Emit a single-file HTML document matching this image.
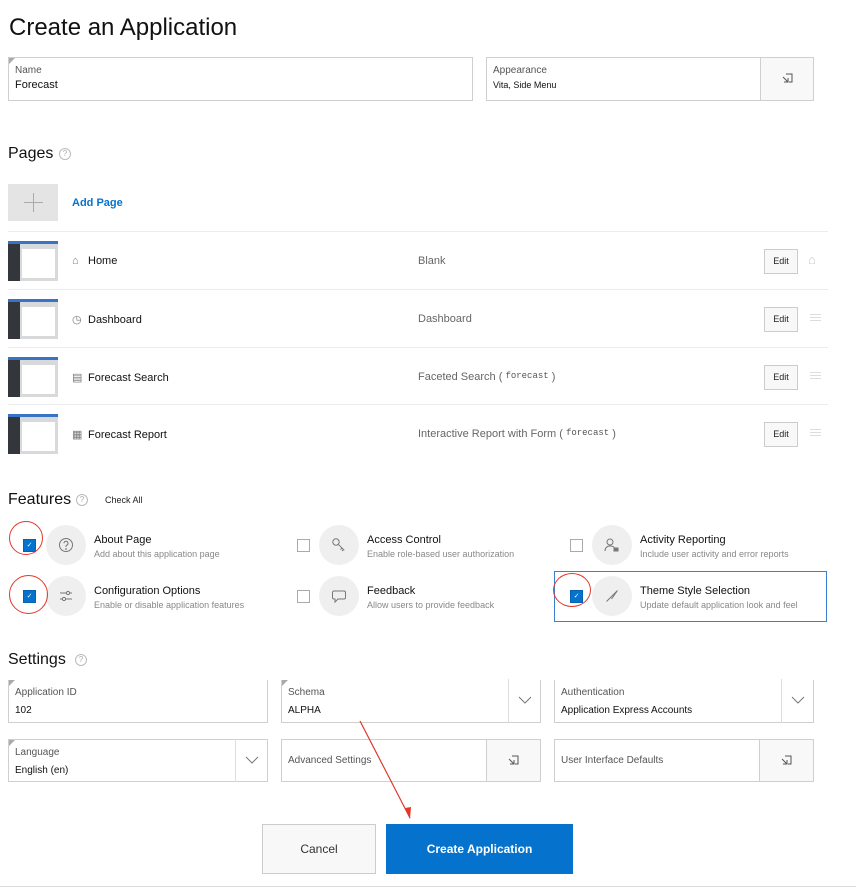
<!DOCTYPE html>
<html><head><meta charset="utf-8">
<style>
*{box-sizing:border-box;margin:0;padding:0}
body{width:856px;height:892px;background:#fff;font-family:"Liberation Sans",sans-serif;color:#000;position:relative;overflow:hidden}
.a{position:absolute}
.fld{position:absolute;border:1px solid #cfcfcf;background:#fff}
.fld .l{position:absolute;left:6px;top:7px;font-size:10px;color:#555}
.fld .v{position:absolute;left:6px;top:25px;font-size:10px;color:#111}
.fld .tri{position:absolute;left:0;top:0;width:0;height:0;border-top:6px solid #aaa;border-right:6px solid transparent}
.btn{position:absolute;top:-1px;bottom:-1px;right:-1px;border:1px solid #cfcfcf;background:#f8f8f8}
h2{position:absolute;font-size:16px;font-weight:normal;color:#111}
.q{position:absolute;width:12px;height:12px;border:1px solid #bbb;border-radius:50%;font-size:8px;color:#aaa;text-align:center;line-height:10px}
.row{position:absolute;left:8px;width:820px;height:58px;border-top:1px solid #ececec}
.thumb{position:absolute;left:0;top:9px;width:50px;height:40px;background:#d8d9db}
.thumb:before{content:"";position:absolute;left:0;top:0;width:50px;height:3px;background:#3a73c5}
.thumb:after{content:"";position:absolute;left:0;top:3px;width:12px;height:37px;background:#33363a}
.thumb i{position:absolute;left:14px;top:8px;width:33px;height:29px;background:#fff}
.pn{position:absolute;left:64px;top:23px;font-size:11px;color:#111}
.pn span{display:inline-block;width:16px;color:#777;font-size:11px}
.pt{position:absolute;left:410px;top:23px;font-size:11px;color:#666}
.pt code{font-family:"Liberation Mono",monospace;font-size:9px;color:#555;position:relative;top:-2px}
.ed{position:absolute;left:756px;top:17px;width:34px;height:25px;border:1px solid #ccc;background:#f8f8f8;font-size:9px;text-align:center;line-height:23px;color:#222}
.hb{position:absolute;left:802px;top:24px;width:11px;height:9px;background:repeating-linear-gradient(#ddd 0 1px,transparent 1px 3px)}
.cb{position:absolute;width:13px;height:13px;border:1px solid #aaa;background:#fff}
.cb.on{background:#0572ce;border-color:#0562b0;color:#fff;font-size:7px;text-align:center;line-height:11px}
.ci{position:absolute;width:40px;height:40px;border-radius:50%;background:#efefef}
.ci svg{position:absolute;left:12px;top:12px}
.ft{position:absolute;font-size:11px;color:#111}
.fd{position:absolute;font-size:9px;color:#888}
.red{position:absolute;border:1.5px solid #e0382c;border-radius:50%}
.dd{position:absolute;top:-1px;bottom:-1px;right:-1px;width:33px;border-left:1px solid #ddd}
</style></head><body>
<div class="a" style="left:9px;top:14px;font-size:24px;color:#111">Create an Application</div>

<div class="fld" style="left:8px;top:57px;width:465px;height:44px"><div class="tri"></div><div class="l">Name</div><div class="v" style="font-size:11px;top:21px">Forecast</div></div>
<div class="fld" style="left:486px;top:57px;width:328px;height:44px"><div class="l">Appearance</div><div class="v" style="top:22px;font-size:9px">Vita, Side Menu</div>
<div class="btn" style="width:54px"><svg class="a" style="left:20px;top:14px" width="13" height="13" viewBox="0 0 13 13" fill="none" stroke="#555"><path d="M5 2h6v8H8M2 5l5 5M7 6v4H3"/></svg></div></div>

<h2 style="left:8px;top:145px">Pages</h2><div class="q" style="left:59px;top:148px">?</div>
<div class="a" style="left:8px;top:184px;width:50px;height:37px;background:#e4e4e4"><div class="a" style="left:16px;top:18px;width:19px;height:1px;background:#aaa"></div><div class="a" style="left:25px;top:9px;width:1px;height:19px;background:#aaa"></div></div>
<div class="a" style="left:72px;top:197px;font-size:11px;color:#0572ce;font-weight:bold">Add Page</div>

<div class="row" style="top:231px"><div class="thumb"><i></i></div><div class="pn"><span>⌂</span>Home</div><div class="pt">Blank</div><div class="ed">Edit</div><div class="a" style="left:800px;top:20px;font-size:13px;color:#ccc">⌂</div></div>
<div class="row" style="top:289px"><div class="thumb"><i></i></div><div class="pn"><span>◷</span>Dashboard</div><div class="pt">Dashboard</div><div class="ed">Edit</div><div class="hb"></div></div>
<div class="row" style="top:347px"><div class="thumb"><i></i></div><div class="pn"><span>▤</span>Forecast Search</div><div class="pt">Faceted Search ( <code>forecast</code> )</div><div class="ed">Edit</div><div class="hb"></div></div>
<div class="row" style="top:404px"><div class="thumb"><i></i></div><div class="pn"><span>▦</span>Forecast Report</div><div class="pt">Interactive Report with Form ( <code>forecast</code> )</div><div class="ed">Edit</div><div class="hb"></div></div>

<h2 style="left:8px;top:491px">Features</h2><div class="q" style="left:76px;top:494px">?</div>
<div class="a" style="left:105px;top:495px;font-size:9px;color:#222">Check All</div>

<div class="a" style="left:554px;top:571px;width:273px;height:51px;border:1px solid #3a80d0"></div>
<div class="cb on" style="left:23px;top:539px">✓</div>
<div class="ci" style="left:46px;top:525px"><svg width="16" height="16" viewBox="0 0 16 16" fill="none" stroke="#777"><circle cx="8" cy="8" r="6.5"/><path d="M6 6.3a2 2 0 1 1 2.5 1.9c-.4.2-.5.5-.5 1V10"/><circle cx="8" cy="12" r=".4" fill="#777"/></svg></div>
<div class="ft" style="left:94px;top:534px">About Page</div><div class="fd" style="left:94px;top:549px">Add about this application page</div>
<div class="cb" style="left:297px;top:539px"></div>
<div class="ci" style="left:319px;top:525px"><svg width="16" height="16" viewBox="0 0 16 16" fill="none" stroke="#777"><circle cx="5" cy="5" r="3.2"/><path d="M7.3 7.3l6 6M11 11l-1.5 1.5M12.5 12.5L11 14"/></svg></div>
<div class="ft" style="left:367px;top:534px">Access Control</div><div class="fd" style="left:367px;top:549px">Enable role-based user authorization</div>
<div class="cb" style="left:570px;top:539px"></div>
<div class="ci" style="left:592px;top:525px"><svg width="16" height="16" viewBox="0 0 16 16" fill="none" stroke="#777"><circle cx="6" cy="5" r="3"/><path d="M1 14c0-3 2-5 5-5s4 1 4.5 2"/><rect x="10" y="11" width="4" height="3" fill="#777"/></svg></div>
<div class="ft" style="left:640px;top:534px">Activity Reporting</div><div class="fd" style="left:640px;top:549px">Include user activity and error reports</div>

<div class="cb on" style="left:23px;top:590px">✓</div>
<div class="ci" style="left:46px;top:576px"><svg width="16" height="16" viewBox="0 0 16 16" fill="none" stroke="#777"><path d="M2 5h12M2 11h12"/><circle cx="10" cy="5" r="1.6" fill="#efefef"/><circle cx="6" cy="11" r="1.6" fill="#efefef"/></svg></div>
<div class="ft" style="left:94px;top:585px">Configuration Options</div><div class="fd" style="left:94px;top:600px">Enable or disable application features</div>
<div class="cb" style="left:297px;top:590px"></div>
<div class="ci" style="left:319px;top:576px"><svg width="16" height="16" viewBox="0 0 16 16" fill="none" stroke="#777"><path d="M3 3h10a1.5 1.5 0 0 1 1.5 1.5v5A1.5 1.5 0 0 1 13 11H7l-3 3v-3H3a1.5 1.5 0 0 1-1.5-1.5v-5A1.5 1.5 0 0 1 3 3z"/></svg></div>
<div class="ft" style="left:367px;top:585px">Feedback</div><div class="fd" style="left:367px;top:600px">Allow users to provide feedback</div>
<div class="cb on" style="left:570px;top:590px">✓</div>
<div class="ci" style="left:592px;top:576px"><svg width="16" height="16" viewBox="0 0 16 16" fill="none" stroke="#777"><path d="M13.5 2.5L6 10l-1 1-2.5 2.5M13.5 2.5l-6 8.5M5 11l1.5-1.5"/></svg></div>
<div class="ft" style="left:640px;top:585px">Theme Style Selection</div><div class="fd" style="left:640px;top:600px">Update default application look and feel</div>

<div class="red" style="left:9px;top:521px;width:34px;height:34px"></div>
<div class="red" style="left:9px;top:575px;width:39px;height:39px"></div>
<div class="red" style="left:553px;top:573px;width:38px;height:34px"></div>

<h2 style="left:8px;top:651px">Settings</h2><div class="q" style="left:75px;top:654px">?</div>

<div class="fld" style="left:8px;top:680px;width:260px;height:43px;border-top:none"><div class="tri"></div><div class="l">Application ID</div><div class="v">102</div></div>
<div class="fld" style="left:281px;top:680px;width:260px;height:43px;border-top:none"><div class="tri"></div><div class="l">Schema</div><div class="v">ALPHA</div><div class="dd"><svg class="a" style="left:9px;top:17px" width="14" height="8"><path d="M1 1l6 6 6-6" fill="none" stroke="#777"/></svg></div></div>
<div class="fld" style="left:554px;top:680px;width:260px;height:43px;border-top:none"><div class="l">Authentication</div><div class="v">Application Express Accounts</div><div class="dd"><svg class="a" style="left:9px;top:17px" width="14" height="8"><path d="M1 1l6 6 6-6" fill="none" stroke="#777"/></svg></div></div>

<div class="fld" style="left:8px;top:739px;width:260px;height:43px"><div class="tri"></div><div class="l">Language</div><div class="v">English (en)</div><div class="dd"><svg class="a" style="left:9px;top:17px" width="14" height="8"><path d="M1 1l6 6 6-6" fill="none" stroke="#777"/></svg></div></div>
<div class="fld" style="left:281px;top:739px;width:260px;height:43px"><div class="l" style="top:15px">Advanced Settings</div><div class="btn" style="width:55px"><svg class="a" style="left:20px;top:14px" width="13" height="13" viewBox="0 0 13 13" fill="none" stroke="#555"><path d="M5 2h6v8H8M2 5l5 5M7 6v4H3"/></svg></div></div>
<div class="fld" style="left:554px;top:739px;width:260px;height:43px"><div class="l" style="top:15px">User Interface Defaults</div><div class="btn" style="width:55px"><svg class="a" style="left:20px;top:14px" width="13" height="13" viewBox="0 0 13 13" fill="none" stroke="#555"><path d="M5 2h6v8H8M2 5l5 5M7 6v4H3"/></svg></div></div>

<div class="a" style="left:262px;top:824px;width:114px;height:50px;border:1px solid #ccc;background:#f8f8f8;font-size:12px;color:#333;text-align:center;line-height:48px">Cancel</div>
<div class="a" style="left:386px;top:824px;width:187px;height:50px;background:#0572ce;font-size:12px;color:#fff;font-weight:bold;text-align:center;line-height:50px">Create Application</div>
<div class="a" style="left:0;top:886px;width:856px;height:1px;background:#ddd"></div>

<svg class="a" style="left:0;top:0" width="856" height="892"><path d="M360 721L410 818" stroke="#e0382c" stroke-width="1.2"/><path d="M405 808l5 11 1-12z" fill="#e0382c"/></svg>
</body></html>
